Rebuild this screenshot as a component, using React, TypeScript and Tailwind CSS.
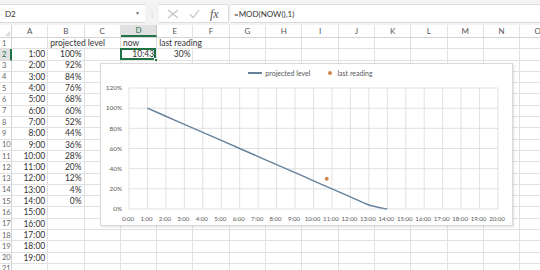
import React from "react";

const COLS = ["A", "B", "C", "D", "E", "F", "G", "H", "I", "J", "K", "L", "M", "N", "O"];
const ROWS = Array.from({ length: 21 }, (_, i) => i + 1);

const levels = [100, 92, 84, 76, 68, 60, 52, 44, 36, 28, 20, 12, 4, 0];

type Cell = { text: string; align?: "left" | "right" | "center"; spill?: boolean };

const cells: Record<string, Cell> = {
    B1: { text: "projected level", align: "left", spill: true },
    D1: { text: "now", align: "left" },
    E1: { text: "last reading", align: "left", spill: true },
    D2: { text: "10:43", align: "right" },
    E2: { text: "30%", align: "right" },
};
for (let r = 2; r <= 20; r++) cells[`A${r}`] = { text: `${r - 1}:00`, align: "right" };
levels.forEach((l, i) => (cells[`B${i + 2}`] = { text: `${l}%`, align: "right" }));

const x = (h: number) => 28 + 18.45 * h;
const y = (p: number) => 127 - p * 1.0083;

// smoothed line like excel's "smoothed line" option
const linePath = () => {
    const pts = levels.map((l, i) => [x(i + 1), y(l)]);
    let d = `M${pts[0][0]},${pts[0][1]}`;
    for (let i = 0; i < pts.length - 1; i++) {
        const p0 = pts[i - 1] || pts[i];
        const p1 = pts[i];
        const p2 = pts[i + 1];
        const p3 = pts[i + 2] || p2;
        const c1 = [p1[0] + (p2[0] - p0[0]) / 6, p1[1] + (p2[1] - p0[1]) / 6];
        const c2 = [p2[0] - (p3[0] - p1[0]) / 6, p2[1] - (p3[1] - p1[1]) / 6];
        d += ` C${c1[0]},${c1[1]} ${c2[0]},${c2[1]} ${p2[0]},${p2[1]}`;
    }
    return d;
};

const Chart = () => {
    return (
        <div className="absolute left-[100px] top-[63px] w-[413px] h-[163px] bg-white border border-[#d9d9d9] shadow-[1px_1px_2px_rgba(0,0,0,0.12)] flex flex-col">
            <div className="h-[18px] flex items-center justify-center gap-[10px] pl-[8px] text-[7px] text-[#595959]">
                <div className="flex items-center gap-[3px]">
                    <span className="w-[14px] h-[1.5px] bg-[#66829a]" />
                    <span>projected level</span>
                </div>
                <div className="flex items-center gap-[5px] ml-[8px]">
                    <span className="w-[4px] h-[4px] rounded-full bg-[#d0884f]" />
                    <span>last reading</span>
                </div>
            </div>
            <svg width={413} height={145} className="block">
                {[0, 20, 40, 60, 80, 100, 120].map((p) => (
                    <g key={p}>
                        <line x1={x(0)} x2={x(20)} y1={y(p)} y2={y(p)} stroke="#d9d9d9" strokeWidth={0.8} />
                        <text x={21} y={y(p) + 2.2} textAnchor="end" fontSize={6.4} fill="#595959" fontFamily="Lato, sans-serif">
                            {p}%
                        </text>
                    </g>
                ))}
                {Array.from({ length: 21 }, (_, h) => (
                    <g key={h}>
                        <line x1={x(h)} x2={x(h)} y1={y(120)} y2={y(0)} stroke="#d9d9d9" strokeWidth={0.8} />
                        <text x={x(h) - 1} y={138.5} textAnchor="middle" fontSize={6.1} fill="#595959" fontFamily="Lato, sans-serif">
                            {h}:00
                        </text>
                    </g>
                ))}
                <path d={linePath()} fill="none" stroke="#66829a" strokeWidth={1.4} />
                <circle cx={x(10 + 43 / 60)} cy={y(30)} r={2} fill="#d0884f" />
            </svg>
        </div>
    );
};

const Toolbar = () => {
    return (
        <div className="h-[25px] bg-[#f3f3f3] pt-[4px] pb-[2px] flex items-stretch text-[8px] text-[#333]">
            <div className="w-[145px] bg-white border-y border-[#dadada] flex items-center justify-between pl-[5px] pr-[5px]">
                <span>D2</span>
                <span className="text-[5px] text-[#666]">▼</span>
            </div>
            <div className="w-[14px] flex items-center justify-center text-[#c8c8c8] text-[8px]">⋮</div>
            <div className="flex items-center gap-[10px] pl-[8px] pr-[6px] bg-white border-y border-[#dadada] w-[69px]">
                <svg width="12" height="10" viewBox="0 0 12 10">
                    <path d="M1 1 L11 9 M11 1 L1 9" stroke="#c4c4c4" strokeWidth="1.2" />
                </svg>
                <svg width="11" height="10" viewBox="0 0 11 10">
                    <path d="M1 5.5 L4 8.5 L10 1" stroke="#c4c4c4" strokeWidth="1.2" fill="none" />
                </svg>
                <span className="italic text-[12px] text-[#555] font-['Liberation_Serif',serif] leading-none">fx</span>
            </div>
            <div className="w-[1px] bg-[#dadada] my-[1px]" />
            <div className="flex-1 ml-[2px] bg-white border-y border-[#dadada] flex items-center pl-[3px]">=MOD(NOW(),1)</div>
        </div>
    );
};

const Sheet = () => {
    return (
        <div className="flex flex-col text-[8.5px] text-[#333]">
            <div className="h-[13px] flex bg-white border-b border-[#d4d4d4]">
                <div className="w-[12px] shrink-0 border-r border-[#d4d4d4] flex items-end justify-end pr-[1px] pb-[1px]">
                    <span className="w-0 h-0 border-l-[5px] border-l-transparent border-b-[5px] border-b-[#dcdcdc]" />
                </div>
                {COLS.map((c) => (
                    <div
                        key={c}
                        className={`w-[36.3px] shrink-0 flex items-center justify-center text-[8px] border-r ${c === "D" ? "bg-[#e1e1e1] text-[#217346] border-b-2 border-b-[#217346] border-r-[#c6c6c6]" : "text-[#555] border-[#e1e1e1]"}`}
                    >
                        {c}
                    </div>
                ))}
            </div>
            {ROWS.map((r) => (
                <div key={r} className="h-[11.3px] flex">
                    <div
                        className={`w-[12px] shrink-0 flex items-center pl-[2px] text-[7.5px] border-b border-[#e1e1e1] ${r === 2 ? "bg-[#e1e1e1] text-[#217346] border-r-2 border-r-[#217346]" : "text-[#666] border-r border-r-[#d4d4d4]"}`}
                    >
                        {r}
                    </div>
                    {COLS.map((c) => {
                        const cell = cells[`${c}${r}`];
                        const sel = c === "D" && r === 2;
                        return (
                            <div
                                key={c}
                                className={`relative w-[36.3px] shrink-0 flex items-center border-b border-[#e1e1e1] ${cell?.spill ? "" : "border-r"} border-r-[#e1e1e1] ${cell?.align === "right" ? "justify-end pr-[2px]" : "justify-start pl-[2px]"}`}
                            >
                                {cell && <span className="whitespace-nowrap leading-none relative z-10">{cell.text}</span>}
                                {sel && (
                                    <>
                                        <span className="absolute -left-[1px] -top-[1px] -right-[0px] -bottom-[0px] border-2 border-[#217346]" />
                                        <span className="absolute -right-[2px] -bottom-[2px] w-[4px] h-[4px] bg-[#217346] border border-white" />
                                    </>
                                )}
                            </div>
                        );
                    })}
                </div>
            ))}
        </div>
    );
};

const App = () => {
    return (
        <div className="relative w-[540px] h-[270px] overflow-hidden bg-white font-['Lato',sans-serif]">
            <Toolbar />
            <Sheet />
            <Chart />
        </div>
    );
};

export default App;
